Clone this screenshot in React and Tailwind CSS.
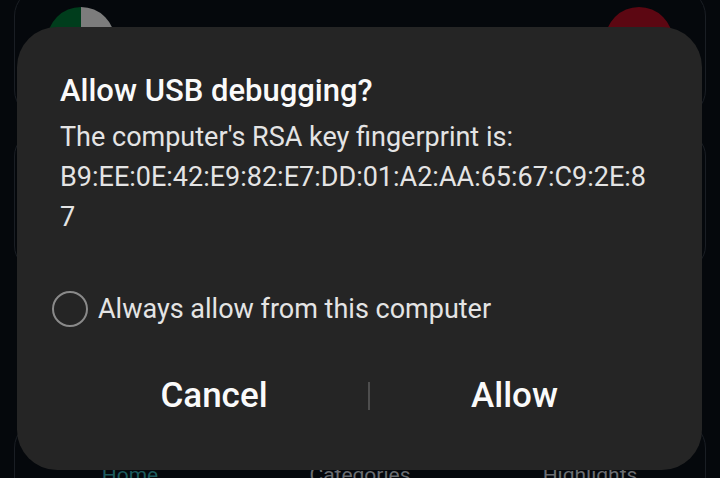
import React from 'react';

const App = () => {
    return (
        <div className="relative w-[720px] h-[478px] overflow-hidden bg-[#05080c] font-['Roboto','Noto_Sans',sans-serif]">
            {/* background app */}
            <div className="flex flex-col px-[14px]">
                <div className="-mt-[12px] h-[130px] rounded-[28px] border border-[#1a1e24] flex justify-between items-start pt-[18px] px-[32px]">
                    <div className="w-[68px] h-[68px] rounded-full overflow-hidden flex">
                        <div className="w-1/2 h-full bg-[#003d1c]" />
                        <div className="w-1/2 h-full bg-[#7c7c7c]" />
                    </div>
                    <div className="w-[68px] h-[68px] rounded-full bg-[#5c0712]" />
                </div>
                <div className="mt-[14px] h-[138px] rounded-[24px] border border-[#1a1e24]" />
                <div className="mt-[150px] h-[120px] rounded-[28px] border border-[#1a1e24] flex pt-[40px]">
                    <div className="flex-1 text-center text-[21px] leading-[28px] text-[#1d5b5e]">Home</div>
                    <div className="flex-1 text-center text-[21px] leading-[28px] text-[#6a6d72]">Categories</div>
                    <div className="flex-1 text-center text-[21px] leading-[28px] text-[#6a6d72]">Highlights</div>
                </div>
            </div>

            {/* dialog */}
            <div className="absolute left-[17px] top-[27px] w-[685px] h-[443px] rounded-[40px] bg-[#252525] px-[43px] pt-[44px]">
                <h2 className="text-[31px] leading-[40px] font-medium text-[#fafafa]">Allow USB debugging?</h2>
                <div className="mt-[6px] text-[27px] leading-[40px] text-[#e4e4e4]">
                    <p>The computer's RSA key fingerprint is:</p>
                    <p>B9:EE:0E:42:E9:82:E7:DD:01:A2:AA:65:67:C9:2E:8</p>
                    <p>7</p>
                </div>
                <label className="mt-[54px] flex items-center gap-[10px] -ml-[8px]">
                    <span className="w-[36px] h-[36px] rounded-full border-2 border-[#8a8a8a]" />
                    <span className="text-[27px] leading-[36px] text-[#e4e4e4]">Always allow from this computer</span>
                </label>
                <div className="mt-[49px] flex items-center h-[40px]">
                    <button className="w-[308px] text-[35px] leading-[40px] font-medium text-[#fafafa] text-center">Cancel</button>
                    <div className="w-[2px] h-[28px] bg-[#4e4e4e]" />
                    <button className="flex-1 text-[35px] leading-[40px] font-medium text-[#fafafa] text-center">Allow</button>
                </div>
            </div>
        </div>
    );
};

export default App;
